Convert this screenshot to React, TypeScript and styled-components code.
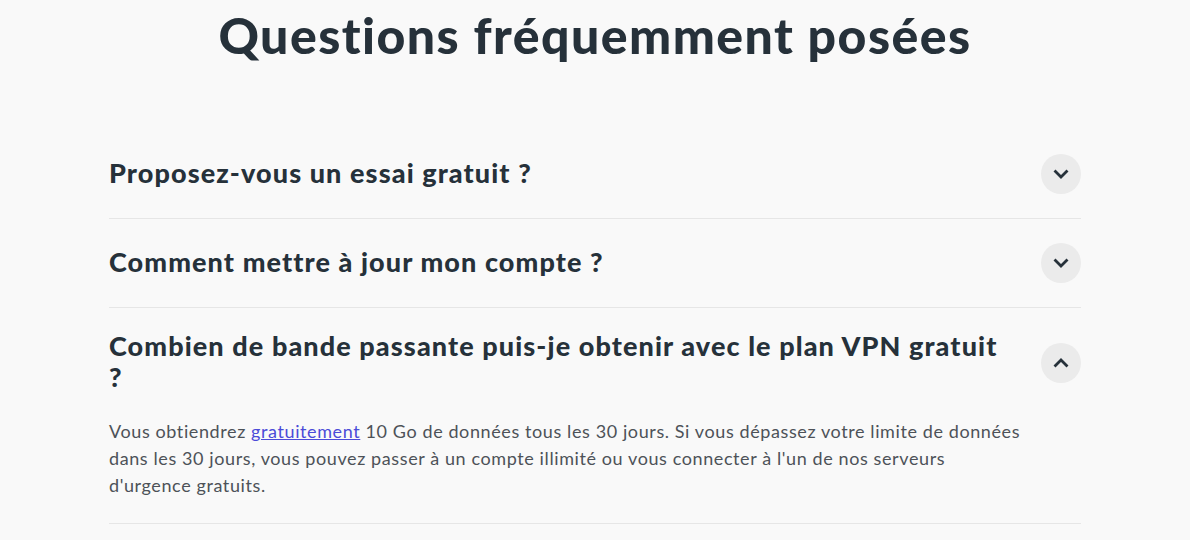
import React, { useState } from 'react';
import styled, { createGlobalStyle } from 'styled-components';

const GlobalStyle = createGlobalStyle`
  html, body {
    margin: 0;
    padding: 0;
    background: #f9f9f9;
  }
  body {
    font-family: 'Lato', 'Noto Sans', sans-serif;
    color: #26313a;
  }
`;

const Page = styled.div`
  width: 1190px;
  height: 540px;
  overflow: hidden;
  background: #f9f9f9;
`;

const Title = styled.h1`
  margin: 0;
  padding-top: 3px;
  text-align: center;
  font-size: 50px;
  line-height: 64px;
  font-weight: 900;
  letter-spacing: 1.45px;
  color: #26313a;
`;

const List = styled.div`
  width: 972px;
  margin: 63px auto 0;
  display: flex;
  flex-direction: column;
`;

const Item = styled.div`
  border-bottom: 1px solid #e6e6e6;
  padding: 24px 0;
`;

const Head = styled.button`
  all: unset;
  display: flex;
  align-items: center;
  justify-content: space-between;
  gap: 30px;
  width: 100%;
  cursor: pointer;
`;

const Question = styled.h3`
  margin: 0;
  font-size: 27px;
  line-height: 31px;
  font-weight: 900;
  letter-spacing: 1.1px;
  color: #26313a;
  max-width: 902px;
  position: relative;
  top: -2px;
`;

const Toggle = styled.span<{ $open: boolean }>`
  flex: 0 0 40px;
  width: 40px;
  height: 40px;
  border-radius: 50%;
  background: #ebebeb;
  display: flex;
  align-items: center;
  justify-content: center;
  svg {
    transform: rotate(${(p) => (p.$open ? '180deg' : '0deg')});
  }
`;

const Answer = styled.p`
  margin: 24px 0 0;
  font-size: 18px;
  line-height: 27px;
  letter-spacing: 0.6px;
  color: #4d5258;
  max-width: 922px;

  a {
    color: #4b4bd8;
    text-decoration: underline;
  }
`;

const Chevron = () => (
  <svg width="16" height="16" viewBox="0 0 16 16" fill="none">
    <path d="M2.5 5.5 L8 11 L13.5 5.5" stroke="#26313a" strokeWidth="2.8" strokeLinecap="square" />
  </svg>
);

const faqs = [
  { q: 'Proposez-vous un essai gratuit ?' },
  { q: 'Comment mettre à jour mon compte ?' },
  { q: 'Combien de bande passante puis-je obtenir avec le plan VPN gratuit ?' },
];

export default function App() {
  const [open, setOpen] = useState<number>(2);

  return (
    <Page>
      <GlobalStyle />
      <Title>Questions fréquemment posées</Title>
      <List>
        {faqs.map((f, i) => (
          <Item key={i}>
            <Head onClick={() => setOpen(open === i ? -1 : i)}>
              <Question>{f.q}</Question>
              <Toggle $open={open === i}>
                <Chevron />
              </Toggle>
            </Head>
            {open === i && (
              <Answer>
                Vous obtiendrez <a href="#">gratuitement</a> 10 Go de données tous les 30 jours. Si vous
                dépassez votre limite de données dans les 30 jours, vous pouvez passer à un compte
                illimité ou vous connecter à l'un de nos serveurs {"d'urgence\u00a0gratuits."}
              </Answer>
            )}
          </Item>
        ))}
      </List>
    </Page>
  );
}
